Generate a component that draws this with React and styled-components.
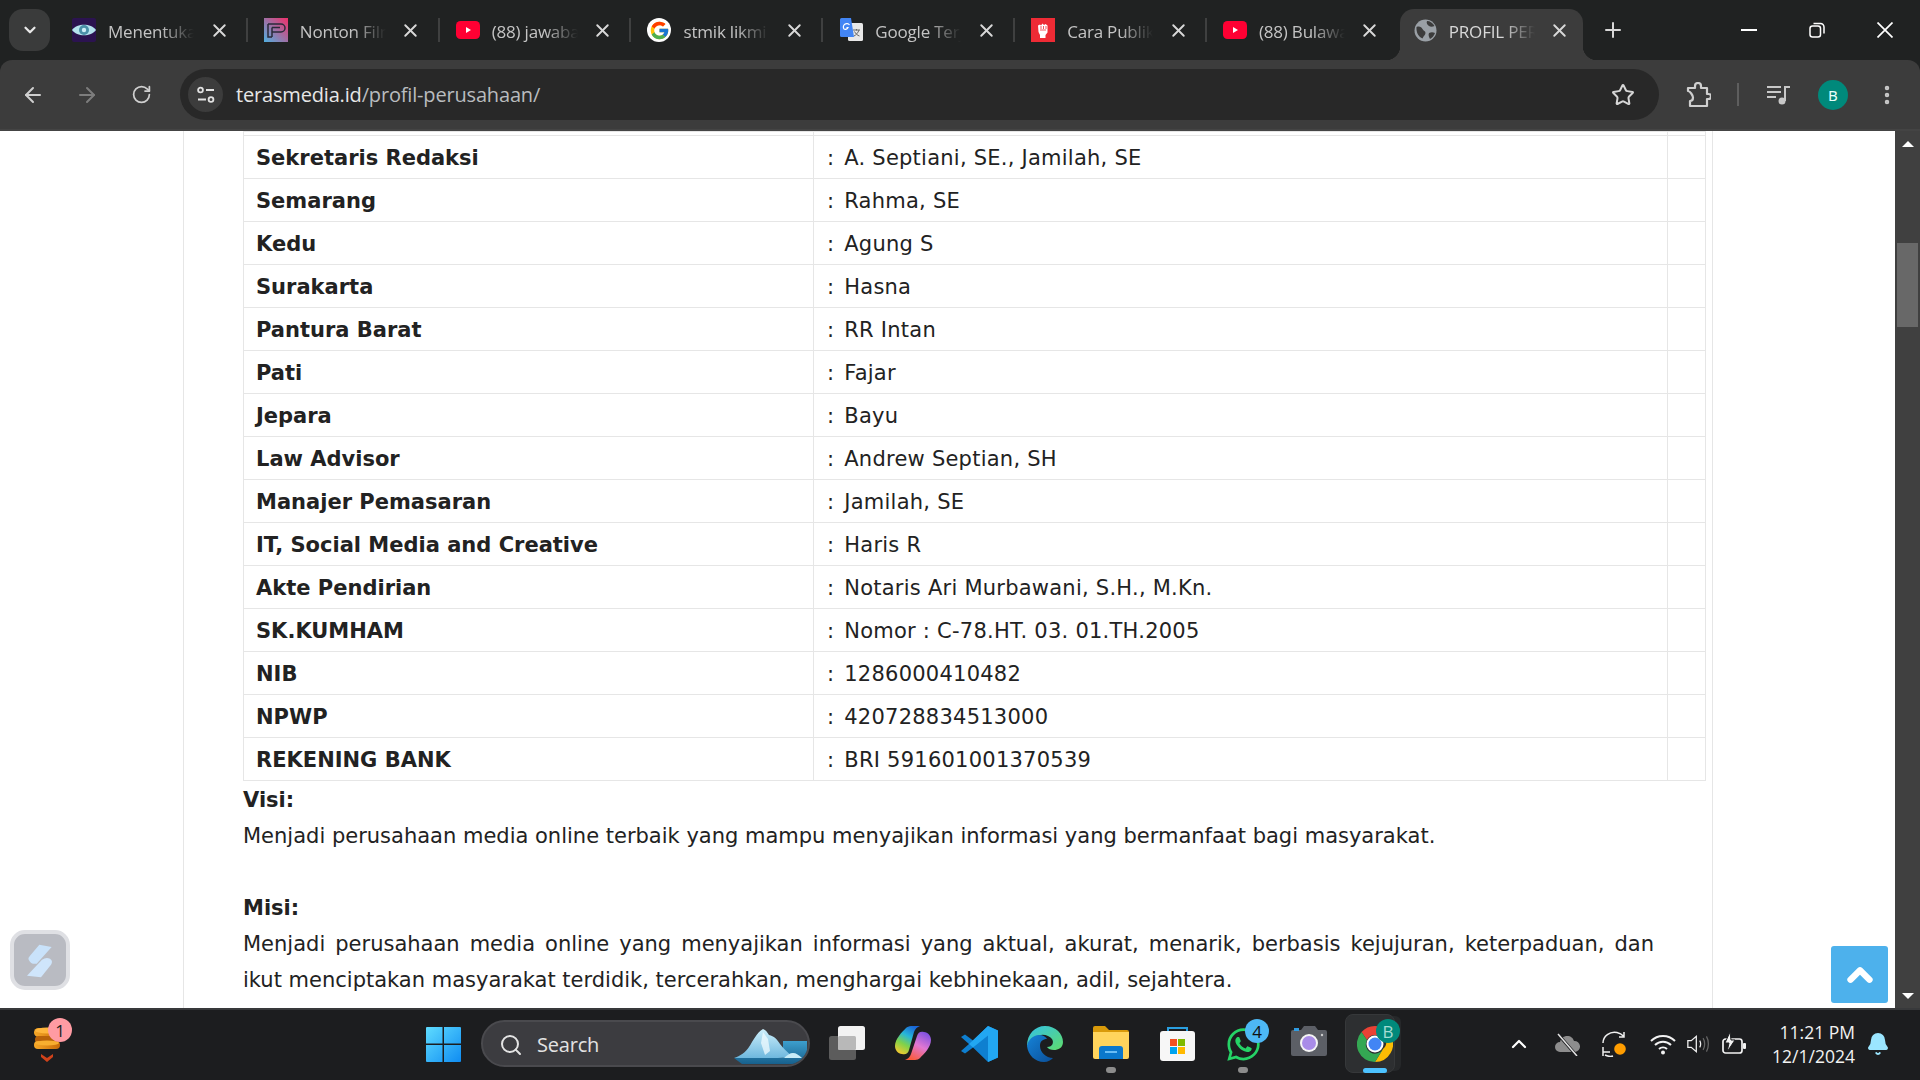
import React from "react";
import styled, { createGlobalStyle } from "styled-components";
import { ArrowLeft, ArrowRight, RotateCw, Star, X, Plus, Search, ChevronUp, ChevronDown, MoreVertical, Bell } from "lucide-react";
import { FcGoogle } from "react-icons/fc";
import { FaWhatsapp } from "react-icons/fa";

const Global = createGlobalStyle`
  html, body { margin: 0; padding: 0; background: #202222; overflow: hidden; }
  * { box-sizing: border-box; }
`;

const Screen = styled.div`
  width: 1920px; height: 1080px; display: flex; flex-direction: column; overflow: hidden;
  background: #202222; position: relative; font-family: "Noto Sans", sans-serif;
`;
const TabStrip = styled.div`
  height: 60px; flex: none; display: flex; align-items: flex-start; padding-top: 9px; padding-left: 9px; padding-right: 1px; color: #d2d2d2;
`;
const TabToggle = styled.div`
  width: 41px; height: 42px; border-radius: 14px; background: #3a3b3b; display: flex; align-items: center; justify-content: center; color: #e8e8e8; margin-right: 6px; flex: none;
`;
const Tab = styled.div`
  width: 191.83px; height: 51px; flex: none; display: flex; align-items: center; padding: 0 0 9px 16px;
`;
const Fav = styled.span`
  width: 24px; height: 24px; display: flex; align-items: center; justify-content: center; flex: none; margin-right: 12px;
`;
const TabTitle = styled.span`
  width: 86px; flex: none; overflow: hidden; white-space: nowrap; font-size: 17px; letter-spacing: -0.2px; padding-top: 2px; color: ${p => p.$active ? "#d8d8d8" : "#c4c4c4"};
  -webkit-mask-image: linear-gradient(90deg, #000 62%, transparent 100%);
  mask-image: linear-gradient(90deg, #000 62%, transparent 100%);
  font-family: "Open Sans", sans-serif;
`;
const TabClose = styled.span`
  width: 24px; display: flex; justify-content: center; margin-left: 13px; color: #d8d8d8; flex: none;
`;
const TabSep = styled.span`
  width: 2px; height: 24px; background: ${p => p.$hidden ? "transparent" : "#3f4040"}; margin-left: auto; flex: none;
`;
const ActiveTab = styled.div`
  width: 183px; height: 51px; margin-left: 1px; flex: none; display: flex; align-items: center; padding: 0 0 9px 14px; background: #3c3c3c; border-radius: 14px 14px 0 0; position: relative;
  &::before, &::after { content: ""; position: absolute; bottom: 0; width: 14px; height: 14px; }
  &::before { left: -14px; background: radial-gradient(circle at 0 0, transparent 14px, #3c3c3c 14.5px); }
  &::after { right: -14px; background: radial-gradient(circle at 100% 0, transparent 14px, #3c3c3c 14.5px); }
`;
const ActiveFav = styled(Fav)` width: 23px; margin-right: 12px; `;
const NewTab = styled.span`
  margin-left: 17px; width: 26px; height: 42px; display: flex; align-items: center; justify-content: center; color: #d8d8d8; flex: none;
`;
const WinControls = styled.div`
  margin-left: auto; display: flex; height: 42px; align-items: center; color: #fff;
`;
const WinBtn = styled.span`
  width: 68px; display: flex; justify-content: center;
`;

const Toolbar = styled.div`
  height: 71px; flex: none; background: #3c3c3c; border-radius: 12px 12px 0 0; display: flex; align-items: flex-start; padding: 9px 0 0 12px; border-bottom: 2px solid #444;
`;
const NavBtn = styled.span`
  width: 42px; height: 51px; margin-right: 12px; display: flex; align-items: center; justify-content: center; color: ${p => p.$off ? "#7d7d7d" : "#cfcfcf"}; flex: none;
  &:nth-child(3) { margin-right: 18px; }
`;
const Omnibox = styled.div`
  width: 1479px; height: 51px; background: #282828; border-radius: 26px; display: flex; align-items: center; padding-left: 8px; flex: none;
`;
const SiteInfo = styled.span`
  width: 35px; height: 35px; border-radius: 50%; background: #3c3c3c; display: flex; align-items: center; justify-content: center; flex: none; margin-right: 13px;
`;
const Url = styled.span`
  font-size: 20px; color: #e6e6e6; font-family: "Open Sans", sans-serif; letter-spacing: -0.17px;
  & em { font-style: normal; color: #b9bcbf; }
`;
const OmniStar = styled.span`
  margin-left: auto; margin-right: 24px; display: flex; color: #d6d6d6;
`;
const ToolIcons = styled.div`
  display: flex; align-items: center; height: 51px; color: #c8c8c8;
`;
const ToolSlot = styled.span`
  width: ${p => p.$w}px; display: flex; justify-content: center; align-items: center; flex: none;
`;
const ToolDivider = styled.span`
  width: 2px; height: 23px; background: #5e5e5e; flex: none;
`;
const Avatar = styled.span`
  width: 30px; height: 30px; flex: none; border-radius: 50%; background: #00897b; color: #e8fffb; font-size: 15px; display: flex; align-items: center; justify-content: center;
`;

const Viewport = styled.div`
  flex: 1; min-height: 0; display: flex; background: #fff; position: relative;
`;
const PageArea = styled.div`
  flex: 1; overflow: hidden; padding-left: 183px;
`;
const Paper = styled.div`
  width: 1530px; height: 100%; border-left: 1px solid #e6e6e6; border-right: 1px solid #e6e6e6; padding: 0 0 0 59px;
  font-family: "DejaVu Sans", Verdana, sans-serif; font-size: 21px; color: #222;
`;
const InfoTable = styled.table`
  border-collapse: collapse; table-layout: fixed; width: 1463px;
`;
const StubRow = styled.tr` height: 4px; `;
const Row = styled.tr` height: 43px; `;
const Cell = styled.td`
  border: 1px solid #e6e6e6; padding: 2px 12px 0; line-height: 1; white-space: nowrap; font-weight: ${p => p.$b ? 700 : 400};
  width: ${p => p.$w}px; font-size: 21px;
  ${p => p.$value ? "letter-spacing: 0.24px; padding-left: 13px;" : ""}
`;
const StubCell = styled.td`
  border: 1px solid #e6e6e6; padding: 0; height: 4px; width: ${p => p.$w}px;
`;
const Colon = styled.span` margin-right: 3px; `;
const Copy = styled.div`
  width: 1411px; line-height: 36px; font-size: 21px; padding-top: 1px;
`;
const CopyHead = styled.div` font-weight: 700; `;
const JustifiedLine = styled.div` text-align: justify; text-align-last: justify; `;
const Gap = styled.div` height: 36px; `;

const ScrollTrack = styled.div`
  width: 25px; flex: none; background: #404040; display: flex; flex-direction: column; align-items: center; padding: 10px 2px 9px;
`;
const ScrollThumb = styled.div`
  width: 21px; height: 84px; background: #686868; margin-top: 96px; margin-bottom: auto; flex: none;
`;
const ScrollUp = styled.span`
  width: 0; height: 0; border: 6px solid transparent; border-top: 0; border-bottom: 6px solid #fff; flex: none;
`;
const ScrollDown = styled.span`
  width: 0; height: 0; border: 6px solid transparent; border-bottom: 0; border-top: 6px solid #fff; flex: none;
`;
const SideWidget = styled.div`
  position: absolute; left: 10px; top: 799px; width: 60px; height: 60px; border-radius: 15px; background: #b9bbc2; border: 4px solid #dfe0e4; display: flex; align-items: center; justify-content: center;
`;
const BackTop = styled.div`
  position: absolute; left: 1831px; top: 815px; width: 57px; height: 57px; background: #4db1ec; border-radius: 3px; display: flex; align-items: center; justify-content: center; color: #fff;
`;

const Taskbar = styled.div`
  height: 72px; flex: none; background: #1c1d1f; border-top: 2px solid #38393b; display: flex; align-items: flex-start; padding-top: 10px; color: #fff;
`;
const Coin = styled.div`
  width: 40px; height: 50px; margin-left: 31px; margin-right: 355px; position: relative; flex: none; padding-top: 7px;
`;
const Badge = styled.span`
  position: absolute; border-radius: 50%; width: 24px; height: 24px; right: ${p => p.$r}px; top: ${p => p.$t}px;
  background: ${p => p.$bg}; color: ${p => p.$fg}; font-size: 17px; display: flex; align-items: center; justify-content: center; font-family: "Open Sans", sans-serif;
`;
const StartBtn = styled.span`
  width: 35px; height: 35px; margin-top: 7px; margin-right: 20px; flex: none; display: flex;
`;
const SearchPill = styled.div`
  width: 329px; height: 47px; border-radius: 24px; background: #3c3c40; border: 2px solid #4a4a4e; display: flex; align-items: center; padding: 2px 0 0 16px; color: #e3e3e3; flex: none; margin-right: 4px; position: relative; overflow: hidden;
  font-size: 20px; font-family: "Open Sans", sans-serif;
`;
const SearchLabel = styled.span` margin-left: 14px; letter-spacing: -0.2px; `;
const Iceberg = styled.span`
  position: absolute; right: 0; top: 6px; display: flex;
`;
const TaskSlot = styled.div`
  width: 66px; height: 60px; flex: none; display: flex; justify-content: center; padding-top: 6px; position: relative;
`;
const RunDot = styled.span`
  position: absolute; left: 50%; top: ${p => p.$t || 47}px; transform: translateX(-50%); width: ${p => p.$w || 10}px; height: ${p => p.$h || 6}px; border-radius: 3px; background: ${p => p.$c || "#8c8c8c"};
`;
const ChromeStack = styled.span`
  position: absolute; left: 3px; top: -6px; width: 50px; height: 59px; border-radius: 8px; background: #2d2f31; border: 1px solid #36383a; box-shadow: 8px 0 0 -2px #26282a;
`;
const ChromeLogo = styled.span`
  position: relative; display: flex; height: 36px;
`;
const Tray = styled.div`
  margin-left: auto; display: flex; align-items: center; height: 48px; padding-right: 30px; flex: none;
`;
const TraySlot = styled.span`
  width: ${p => p.$w}px; flex: none; display: flex; justify-content: center; align-items: center; position: relative;
`;
const Clock = styled.div`
  width: 94px; flex: none; text-align: right; font-size: 17.5px; line-height: 24px; color: #f2f2f2; font-family: "Open Sans", sans-serif; margin-right: 11px;
`;
const BellWrap = styled.span` width: 24px; display: flex; justify-content: center; color: #9be6ff; `;

const Yt = () => (
  <svg width="24" height="18" viewBox="0 0 24 18"><rect width="24" height="18" rx="4.5" fill="#ff0033" /><path d="M10 6l5 3-5 3z" fill="#fff" /></svg>
);
const EyeIcon = () => (
  <svg width="24" height="24" viewBox="0 0 24 24"><rect width="24" height="24" rx="2" fill="#2b1350" /><path d="M0 12C5 5 19 5 24 12 19 19 5 19 0 12z" fill="#b5e3ef" /><circle cx="12" cy="12" r="5" fill="#4a90a8" /><circle cx="12" cy="12" r="2.2" fill="#cdeef7" /></svg>
);
const PIcon = () => (
  <svg width="24" height="24" viewBox="0 0 24 24"><defs><linearGradient id="pg" x1="1" y1="0" x2="0" y2="1"><stop offset="0" stopColor="#f02f6a" /><stop offset="1" stopColor="#4fb0e0" /></linearGradient></defs><rect width="24" height="24" fill="url(#pg)" /><path d="M4 6h13a3 3 0 010 8H8M8 9.500h8M8 9.500V19M4 6v13h4" fill="none" stroke="#2a2a3a" strokeWidth="1.500" /></svg>
);
const GoogleBadge = styled.span`
  width: 24px; height: 24px; border-radius: 50%; background: #fff; display: flex; align-items: center; justify-content: center;
`;
const TranslateIcon = () => (
  <svg width="23" height="24" viewBox="0 0 23 24"><rect x="8" y="5" width="15" height="18" rx="1.500" fill="#e8e8e8" /><path d="M13 12h7M16.500 11v1.500M19 12c-1 3-3 5-5 6M14.500 13.500c1 2 3 4 5 4.500" stroke="#666" fill="none" /><path d="M1.500 0H11l3 19H1.500A1.500 1.500 0 010 17.500V1.500A1.500 1.500 0 011.500 0z" fill="#4285f4" /><path d="M9.500 7A3 3 0 104 11a3 3 0 004-1.500H6.500" stroke="#fff" strokeWidth="1.200" fill="none" /></svg>
);
const FistIcon = () => (
  <svg width="24" height="24" viewBox="0 0 24 24"><rect width="24" height="24" fill="#ee2b35" /><path d="M7 7.500l2-1 1 1 1.500-2 1.500 1.500 1.500-1 2 1.500 0 7-2 2.500v3h-5.500v-3L7.500 14z" fill="#fff" /><path d="M10 8v3M12.500 8v3M15 8v3M9 12h6" stroke="#ee2b35" strokeWidth="0.800" /></svg>
);
const GlobeIcon = () => (
  <svg width="23" height="23" viewBox="0 0 23 23"><circle cx="11.500" cy="11.500" r="11" fill="#9aa0a6" /><path d="M2.500 8c3-1 5 0 6 2s3 2 3 4-2 3-3 5.500C5 18 2 14 2.500 8zM13 2c3 0 6 2 7.500 5-2 1-4 1-5.500 0s-3-3-2-5zM15 14c2-1 4-1 6 0-1 3-3 5-5 6-1-2-2-4-1-6z" fill="#3c3c3c" /></svg>
);
const TuneIcon = () => (
  <svg width="20" height="18" viewBox="0 0 20 18" fill="none" stroke="#e2e2e2" strokeWidth="1.800"><circle cx="4.500" cy="4" r="2.400" /><path d="M10 4h8M2 13.500h8" /><circle cx="15" cy="13.500" r="2.400" /></svg>
);
const ExtIcon = () => (
  <svg width="25" height="26" viewBox="0 0 25 26" fill="none" stroke="#cfcfcf" strokeWidth="2.200" strokeLinejoin="round"><path d="M2 6h7V4a3 3 0 016 0v2h6v6h1.500a2.500 2.500 0 010 5H21v7H4v-5c2 0 3-1.500 3-3.500S4 9 2 9z" /></svg>
);
const MediaIcon = () => (
  <svg width="24" height="20" viewBox="0 0 24 20" fill="none" stroke="#c8c8c8" strokeWidth="2"><path d="M0 2h14M0 7h14M0 12h9" /><path d="M18 16V2h5" /><circle cx="15" cy="16" r="3.500" fill="#c8c8c8" stroke="none" /></svg>
);
const WinMin = () => <svg width="16" height="2"><rect width="16" height="2" fill="#fff" /></svg>;
const WinMax = () => (
  <svg width="16" height="16" viewBox="0 0 16 16" fill="none" stroke="#fff" strokeWidth="1.500"><rect x="1" y="4" width="10.500" height="11" rx="2.500" /><path d="M4.500 1.500h7a3.500 3.500 0 013.500 3.500v6.500" /></svg>
);
const WinClose = () => (
  <svg width="16" height="16" viewBox="0 0 16 16" stroke="#fff" strokeWidth="1.700"><path d="M0.500 0.500l15 15M15.500 0.500l-15 15" /></svg>
);
const WidgetIcon = () => (
  <svg width="28" height="35" viewBox="80 50 84 105"><path d="M120 55L157 62 112 112Q95 115 88 100 85 95 92 88Z" fill="#c9e2fa" /><path d="M83 148L128 100Q140 92 152 97 162 103 155 115L125 153Z" fill="#cfe5fb" /></svg>
);
const CoinIcon = () => (
  <svg width="32" height="36" viewBox="0 0 32 36"><defs><linearGradient id="cn" x1="0" x2="1"><stop offset="0" stopColor="#f7a928" /><stop offset="1" stopColor="#c96a08" /></linearGradient></defs><rect x="3" y="1" width="26" height="9" rx="4.500" fill="url(#cn)" /><ellipse cx="16" cy="3.500" rx="12" ry="3" fill="#ffb63c" /><rect x="4" y="9" width="24" height="7" rx="3.500" fill="#b9620a" /><rect x="3" y="14" width="26" height="8" rx="4" fill="url(#cn)" /><ellipse cx="16" cy="16" rx="12" ry="2.500" fill="#f8ae2f" /><path d="M10 27l6 4 6-4v3l-6 5-6-5z" fill="#d0421a" /></svg>
);
const WinLogo = () => (
  <svg width="35" height="35" viewBox="0 0 35 35"><defs><linearGradient id="wl" x1="0" y1="0" x2="1" y2="1"><stop offset="0" stopColor="#5fdcff" /><stop offset="1" stopColor="#0f8cf2" /></linearGradient></defs><path d="M1 0h15.500v16.500H0V1a1 1 0 011-1zM18 0h16a1 1 0 011 1v15.500H18zM0 18h16.500v17H1a1 1 0 01-1-1zM18 18h17v16a1 1 0 01-1 1H18z" fill="url(#wl)" /></svg>
);
const IcebergIcon = () => (
  <svg width="74" height="36" viewBox="0 0 74 36"><defs><linearGradient id="ib" x1="0" y1="0" x2="0" y2="1"><stop offset="0" stopColor="#cdeffb" /><stop offset="1" stopColor="#6fb8de" /></linearGradient><linearGradient id="ibw" x1="0" y1="0" x2="0" y2="1"><stop offset="0" stopColor="#3d9fce" /><stop offset="1" stopColor="#17608c" /></linearGradient></defs><path d="M49 13h24v14l-10 9H8L0 30h49z" fill="url(#ibw)" /><path d="M0 30c6-2 12-6 15-11 4-6 8-15 14-18 3 1 4 3 6 6 5 1 8 4 11 9 3 4 7 8 12 12-6 2-12 2-20 2z" fill="url(#ib)" /><path d="M29 4l-2 11 4 12 5-4-2-12z" fill="#f0fbff" opacity=".75" /><path d="M50 30c3-3 6-5 9-5 3 0 6 2 9 5z" fill="#c8ecf8" /></svg>
);
const TaskViewIcon = () => (
  <svg width="36" height="34" viewBox="0 0 36 34"><rect x="0" y="10" width="27" height="24" rx="2.500" fill="#5c5c5c" /><rect x="9" y="0" width="27" height="24" rx="2.500" fill="#f2f2f2" /><rect x="9" y="10" width="18" height="14" rx="1.500" fill="#b8b8b8" /></svg>
);
const CopilotIcon = () => (
  <svg width="36" height="34" viewBox="0 0 36 34"><defs><linearGradient id="c1" x1="0.700" y1="0" x2="0.200" y2="1"><stop offset="0" stopColor="#1a66d8" /><stop offset=".35" stopColor="#27b7d8" /><stop offset=".65" stopColor="#7fd24a" /><stop offset="1" stopColor="#f9c82e" /></linearGradient><linearGradient id="c2" x1="0.800" y1="0" x2="0.300" y2="1"><stop offset="0" stopColor="#7a4fe0" /><stop offset=".5" stopColor="#e178d2" /><stop offset="1" stopColor="#fb5b3c" /></linearGradient></defs><path d="M11 2C12 1 14 0 16 0H25C22 1 20 3 19 6L14 24C13 28 10 29 7 28 3 28 0 24 0 20 0 13 7 6 11 2Z" fill="url(#c1)" /><path d="M25 32C24 33 22 34 20 34H10C13 33 15 31 16 28L22 10C23 6 26 5 29 6 33 6 36 10 36 14 36 21 29 28 25 32Z" fill="url(#c2)" /></svg>
);
const VscIcon = () => (
  <svg width="37" height="36" viewBox="0 0 37 36"><path d="M27 0l10 4.500v27L27 36 12 21.500 4 27.500 0 25l8-7-8-7 4-2.500 8 6z" fill="#0e7fd0" /><path d="M27 0l10 4.500v27L27 36V9.500L12 21.500 8 18z" fill="#22a7f2" /></svg>
);
const EdgeIcon = () => (
  <svg width="36" height="36" viewBox="0 0 36 36"><defs><linearGradient id="e1" x1="0" y1="0" x2="1" y2="1"><stop offset="0" stopColor="#33c1e8" /><stop offset="1" stopColor="#5fdc6b" /></linearGradient><linearGradient id="e2" x1="0" y1="0" x2="1" y2="1"><stop offset="0" stopColor="#1583d8" /><stop offset="1" stopColor="#0b4f98" /></linearGradient></defs><path d="M18 0c11 0 18 8 18 16 0 6-5 8-9 8-3 0-6-1-7-3 6 0 7-5 5-8C22 9 14 7 9 11 5 14 2 18 0 20 0 8 8 0 18 0z" fill="url(#e1)" /><path d="M0 20c1-6 6-11 12-11 4 0 7 2 8 4-4 0-7 2-7 7 0 6 6 12 13 12-2 2-5 4-9 4C8 36 1 29 0 20z" fill="url(#e2)" /></svg>
);
const FolderIcon = () => (
  <svg width="36" height="33" viewBox="0 0 36 33"><path d="M0 2a2 2 0 012-2h10l4 4h18a2 2 0 012 2v6H0z" fill="#d99a0a" /><path d="M0 6h36v25a2 2 0 01-2 2H2a2 2 0 01-2-2z" fill="#ffd45c" /><path d="M6 33V23a3 3 0 013-3h18a3 3 0 013 3v10z" fill="#0b78cc" /><rect x="12" y="25" width="12" height="2" fill="#69bdf5" /></svg>
);
const StoreIcon = () => (
  <svg width="35" height="35" viewBox="0 0 35 35"><path d="M8 6V2h19v4" fill="none" stroke="#2a9fe0" strokeWidth="2" /><rect y="5" width="35" height="30" rx="3" fill="#f7f7f7" /><rect x="10" y="13" width="7" height="7" fill="#f25022" /><rect x="18" y="13" width="7" height="7" fill="#7fba00" /><rect x="10" y="21" width="7" height="7" fill="#00a4ef" /><rect x="18" y="21" width="7" height="7" fill="#ffb900" /></svg>
);
const CameraIcon = () => (
  <svg width="36" height="30" viewBox="0 0 36 30"><rect y="4" width="36" height="26" rx="2" fill="#5c5f66" /><path d="M10 4l3-4h11l3 4z" fill="#5c5f66" /><rect x="3" y="2" width="5" height="3" fill="#2f9be0" /><circle cx="18" cy="17" r="9" fill="#f5f5f5" /><circle cx="18" cy="17" r="7" fill="#a98ce8" /><circle cx="31" cy="9" r="1.200" fill="#ccc" /></svg>
);
const ChromeIcon = () => (
  <svg width="36" height="36" viewBox="0 0 36 36"><path d="M18 0a18 18 0 0115.600 9H18a9 9 0 00-8 5L4.500 6A18 18 0 0118 0z" fill="#e94235" /><path d="M33.600 9A18 18 0 0118 36l8-13a9 9 0 000-14z" fill="#fbbc04" /><path d="M4.500 6L10 14a9 9 0 0016 9l-8 13A18 18 0 014.500 6z" fill="#34a853" /><circle cx="18" cy="18" r="8.500" fill="#fff" /><circle cx="18" cy="18" r="6.500" fill="#4285f4" /></svg>
);
const Cloud = () => (
  <svg width="26" height="24" viewBox="0 0 26 24"><path d="M6 20a5 5 0 010-10c1-4 4-6 7-6 4 0 6 2 7 5a5.500 5.500 0 011 11z" fill="#8d8d8d" /><path d="M3 1l19 22" stroke="#1c1d1f" strokeWidth="3" /><path d="M4 2l19 22" stroke="#e4e4e4" strokeWidth="1.500" /></svg>
);
const SyncIcon = () => (
  <svg width="26" height="26" viewBox="0 0 26 26" fill="none" stroke="#f0f0f0" strokeWidth="1.500"><path d="M1 12C1 5 8 0 15 1.500c3 .6 5 2 7 4M22 1v5h-5" /><path d="M1 16v9M1 21h7M3 24c2 1 5 2 8 1" /><circle cx="18" cy="18" r="5.800" fill="#ff9d00" stroke="none" /></svg>
);
const Wifi = () => (
  <svg width="26" height="21" viewBox="0 0 26 21" fill="none" stroke="#f2f2f2" strokeWidth="2"><path d="M1 7a17 17 0 0124 0M5 11a11.500 11.500 0 0116 0M9 15a6 6 0 018 0" /><circle cx="13" cy="18.500" r="2" fill="#f2f2f2" stroke="none" /></svg>
);
const Speaker = () => (
  <svg width="26" height="22" viewBox="0 0 26 22" fill="none" strokeWidth="1.500"><path d="M1 7h4l6-5v18l-6-5H1z" stroke="#f2f2f2" /><path d="M15 7c1.500 2 1.500 6 0 8" stroke="#f2f2f2" /><path d="M19 4c2.500 4 2.500 10 0 14M23 2c3 5 3 13 0 18" stroke="#666" /></svg>
);
const Battery = () => (
  <svg width="26" height="24" viewBox="0 0 26 24" fill="none" stroke="#f2f2f2" strokeWidth="1.700"><rect x="1" y="7" width="19" height="14" rx="2.500" /><rect x="21" y="11" width="3" height="6" rx="1" fill="#f2f2f2" stroke="none" /><path d="M8 0L3 11h4l-2 9 8-12H9z" fill="#f2f2f2" stroke="#1c1d1f" strokeWidth="1" /></svg>
);

const tabs = [
  { t: "Menentukan Pilihan", i: <EyeIcon /> },
  { t: "Nonton Film Online", i: <PIcon /> },
  { t: "(88) jawaban soal", i: <Yt /> },
  { t: "stmik likmi bandung", i: <GoogleBadge><FcGoogle size={21} /></GoogleBadge> },
  { t: "Google Terjemahan", i: <TranslateIcon /> },
  { t: "Cara Publikasi", i: <FistIcon /> },
  { t: "(88) Bulawan", i: <Yt />, last: true },
];

const rows = [
  ["Sekretaris Redaksi", "A. Septiani, SE., Jamilah, SE"],
  ["Semarang", "Rahma, SE"],
  ["Kedu", "Agung S"],
  ["Surakarta", "Hasna"],
  ["Pantura Barat", "RR Intan"],
  ["Pati", "Fajar"],
  ["Jepara", "Bayu"],
  ["Law Advisor", "Andrew Septian, SH"],
  ["Manajer Pemasaran", "Jamilah, SE"],
  ["IT, Social Media and Creative", "Haris R"],
  ["Akte Pendirian", "Notaris Ari Murbawani, S.H., M.Kn."],
  ["SK.KUMHAM", "Nomor : C-78.HT. 03. 01.TH.2005"],
  ["NIB", "1286000410482"],
  ["NPWP", "420728834513000"],
  ["REKENING BANK", "BRI 591601001370539"],
];

export default function App() {
  return (
    <Screen>
      <Global />
      <TabStrip>
        <TabToggle><ChevronDown size={18} strokeWidth={3} /></TabToggle>
        {tabs.map(tab => (
          <Tab key={tab.t}>
            <Fav>{tab.i}</Fav>
            <TabTitle>{tab.t}</TabTitle>
            <TabClose><X size={21} strokeWidth={2.2} /></TabClose>
            <TabSep $hidden={tab.last} />
          </Tab>
        ))}
        <ActiveTab>
          <ActiveFav><GlobeIcon /></ActiveFav>
          <TabTitle $active>PROFIL PERUSAHAAN</TabTitle>
          <TabClose><X size={21} strokeWidth={2.2} /></TabClose>
        </ActiveTab>
        <NewTab><Plus size={24} strokeWidth={2} /></NewTab>
        <WinControls>
          <WinBtn><WinMin /></WinBtn>
          <WinBtn><WinMax /></WinBtn>
          <WinBtn><WinClose /></WinBtn>
        </WinControls>
      </TabStrip>
      <Toolbar>
        <NavBtn><ArrowLeft size={24} /></NavBtn>
        <NavBtn $off><ArrowRight size={24} /></NavBtn>
        <NavBtn><RotateCw size={21} /></NavBtn>
        <Omnibox>
          <SiteInfo><TuneIcon /></SiteInfo>
          <Url>terasmedia.id<em>/profil-perusahaan/</em></Url>
          <OmniStar><Star size={24} strokeWidth={2} /></OmniStar>
        </Omnibox>
        <ToolIcons>
          <ToolSlot $w={78}><ExtIcon /></ToolSlot>
          <ToolDivider />
          <ToolSlot $w={80}><MediaIcon /></ToolSlot>
          <ToolSlot $w={28}><Avatar>B</Avatar></ToolSlot>
          <ToolSlot $w={80}><MoreVertical size={24} strokeWidth={2.5} /></ToolSlot>
        </ToolIcons>
      </Toolbar>
      <Viewport>
        <PageArea>
          <Paper>
            <InfoTable>
              <tbody>
                <StubRow><StubCell $w={570} /><StubCell $w={854} /><StubCell $w={38} /></StubRow>
                {rows.map(([a, b]) => (
                  <Row key={a}>
                    <Cell $b>{a}</Cell>
                    <Cell $value><Colon>:</Colon> {b}</Cell>
                    <Cell />
                  </Row>
                ))}
              </tbody>
            </InfoTable>
            <Copy>
              <CopyHead>Visi:</CopyHead>
              <div>Menjadi perusahaan media online terbaik yang mampu menyajikan informasi yang bermanfaat bagi masyarakat.</div>
              <Gap />
              <CopyHead>Misi:</CopyHead>
              <JustifiedLine>Menjadi perusahaan media online yang menyajikan informasi yang aktual, akurat, menarik, berbasis kejujuran, keterpaduan, dan</JustifiedLine>
              <div>ikut menciptakan masyarakat terdidik, tercerahkan, menghargai kebhinekaan, adil, sejahtera.</div>
            </Copy>
          </Paper>
        </PageArea>
        <ScrollTrack>
          <ScrollUp />
          <ScrollThumb />
          <ScrollDown />
        </ScrollTrack>
        <SideWidget><WidgetIcon /></SideWidget>
        <BackTop><ChevronUp size={38} strokeWidth={4} /></BackTop>
      </Viewport>
      <Taskbar>
        <Coin>
          <CoinIcon />
          <Badge $r={-1} $t={-2} $bg="#ff9ba3" $fg="#222">1</Badge>
        </Coin>
        <StartBtn><WinLogo /></StartBtn>
        <SearchPill>
          <Search size={24} strokeWidth={2} />
          <SearchLabel>Search</SearchLabel>
          <Iceberg><IcebergIcon /></Iceberg>
        </SearchPill>
        <TaskSlot><TaskViewIcon /></TaskSlot>
        <TaskSlot><CopilotIcon /></TaskSlot>
        <TaskSlot><VscIcon /></TaskSlot>
        <TaskSlot><EdgeIcon /></TaskSlot>
        <TaskSlot><FolderIcon /><RunDot /></TaskSlot>
        <TaskSlot><StoreIcon /></TaskSlot>
        <TaskSlot>
          <FaWhatsapp size={37} color="#25d366" />
          <Badge $r={7} $t={-1} $bg="#4db8f5" $fg="#111">4</Badge>
          <RunDot />
        </TaskSlot>
        <TaskSlot><CameraIcon /></TaskSlot>
        <TaskSlot>
          <ChromeStack />
          <ChromeLogo><ChromeIcon /></ChromeLogo>
          <Badge $r={8} $t={-1} $bg="#00897b" $fg="#a5dcd3">B</Badge>
          <RunDot $w={24} $h={5} $t={48} $c="#4cc2ff" />
        </TaskSlot>
        <Tray>
          <TraySlot $w={48}><ChevronUp size={24} strokeWidth={2.2} /></TraySlot>
          <TraySlot $w={48}><Cloud /></TraySlot>
          <TraySlot $w={48}><SyncIcon /></TraySlot>
          <TraySlot $w={48}><Wifi /></TraySlot>
          <TraySlot $w={22}><Speaker /></TraySlot>
          <TraySlot $w={52}><Battery /></TraySlot>
          <Clock>11:21 PM<br />12/1/2024</Clock>
          <BellWrap><Bell size={24} fill="#9be6ff" /></BellWrap>
        </Tray>
      </Taskbar>
    </Screen>
  );
}
